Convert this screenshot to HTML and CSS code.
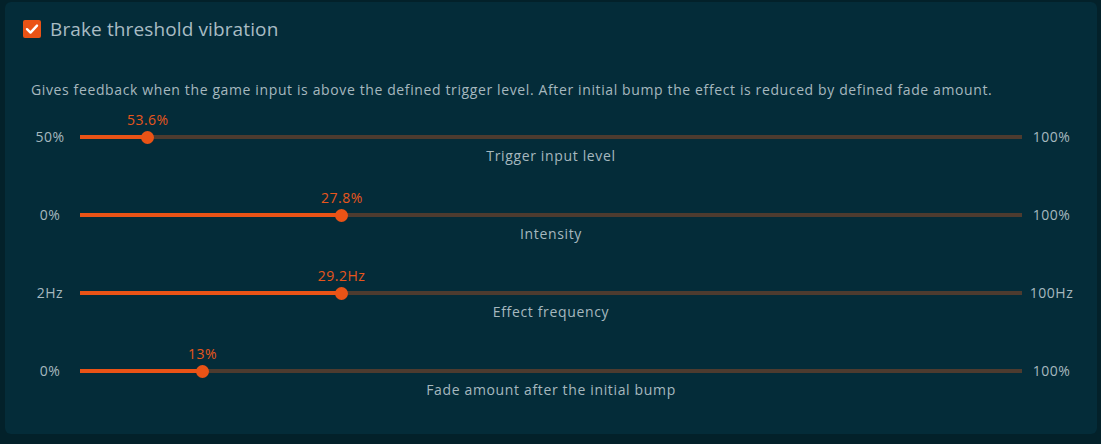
FILE: index.html
```html
<!DOCTYPE html>
<html>
<head>
<meta charset="utf-8">
<link rel="stylesheet" href="styles.css">
</head>
<body>
<div class="panel">
  <div class="head">
    <span class="check">
      <svg width="18" height="18" viewBox="0 0 18 18"><rect width="18" height="18" rx="2" fill="#ea5316"/><path d="M4 9.2 L7.5 12.6 L14 5.6" fill="none" stroke="#fff" stroke-width="2.4" stroke-linecap="round" stroke-linejoin="round"/></svg>
    </span>
    <span class="title">Brake threshold vibration</span>
  </div>
  <p class="desc">Gives feedback when the game input is above the defined trigger level. After initial bump the effect is reduced by defined fade amount.</p>
  <div class="sliders">
    <div class="slider">
      <div class="min">50%</div>
      <div class="track"><div class="fill" style="width:7.2%"></div><div class="thumb" style="left:7.2%"><span class="val">53.6%</span></div></div>
      <div class="max">100%</div>
      <div class="name">Trigger input level</div>
    </div>
    <div class="slider">
      <div class="min">0%</div>
      <div class="track"><div class="fill" style="width:27.8%"></div><div class="thumb" style="left:27.8%"><span class="val">27.8%</span></div></div>
      <div class="max">100%</div>
      <div class="name">Intensity</div>
    </div>
    <div class="slider">
      <div class="min">2Hz</div>
      <div class="track"><div class="fill" style="width:27.76%"></div><div class="thumb" style="left:27.76%"><span class="val">29.2Hz</span></div></div>
      <div class="max">100Hz</div>
      <div class="name">Effect frequency</div>
    </div>
    <div class="slider">
      <div class="min">0%</div>
      <div class="track"><div class="fill" style="width:13%"></div><div class="thumb" style="left:13%"><span class="val">13%</span></div></div>
      <div class="max">100%</div>
      <div class="name">Fade amount after the initial bump</div>
    </div>
  </div>
</div>
</body>
</html>
```
FILE: styles.css
```css
html, body {
  margin: 0;
  padding: 0;
  background: #03212a;
  width: 1101px;
  height: 444px;
  overflow: hidden;
  font-family: "Open Sans", "Liberation Sans", sans-serif;
  color: #a6b8bf;
}
.panel {
  margin: 2px 0 0 5px;
  width: 1092px;
  height: 432px;
  box-sizing: border-box;
  background: #042c39;
  border-radius: 6px;
  padding: 17px 0 0 0;
}
.head {
  display: flex;
  align-items: center;
  height: 20px;
  padding-left: 18px;
}
.check {
  width: 18px;
  height: 18px;
  display: block;
}
.check svg { display: block; }
.title {
  margin-left: 9px;
  font-size: 19px;
  color: #a9bcc4;
  line-height: 20px;
  letter-spacing: 0.12px;
}
.desc {
  margin: 42px 0 0 26px;
  font-size: 14px;
  line-height: 18px;
  letter-spacing: 0.62px;
  white-space: nowrap;
}
.sliders {
  margin-top: 31px;
  display: flex;
  flex-direction: column;
  gap: 43px;
}
.slider {
  display: grid;
  grid-template-columns: 50px 942px 50px;
  grid-template-rows: 14px 18px;
  column-gap: 5px;
  row-gap: 3px;
  margin-left: 20px;
  align-items: center;
  font-size: 14px;
  letter-spacing: 0.5px;
}
.min, .max {
  text-align: center;
  line-height: 14px;
  white-space: nowrap;
}
.max { margin-left: -1px; }
.track {
  position: relative;
  height: 4px;
  background: #4d3b2f;
}
.fill {
  height: 4px;
  background: #ea5316;
}
.thumb {
  position: absolute;
  top: 50%;
  width: 13px;
  height: 13px;
  margin: -6.5px 0 0 -6.5px;
  border-radius: 50%;
  background: #ea5316;
}
.val {
  position: absolute;
  left: 50%;
  bottom: 15px;
  transform: translateX(-50%);
  color: #e8561c;
  white-space: nowrap;
  line-height: 18px;
}
.name {
  grid-column: 2;
  text-align: center;
  line-height: 18px;
  letter-spacing: 0.65px;
}
```
